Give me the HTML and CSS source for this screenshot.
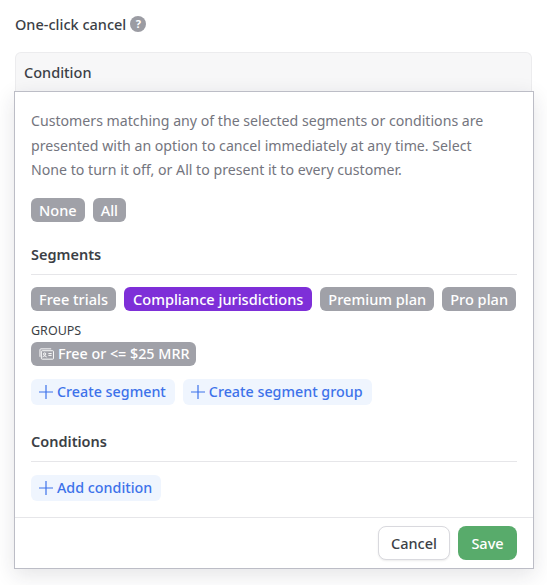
FILE: index.html
```html
<!DOCTYPE html>
<html lang="en">
<head>
    <meta charset="UTF-8">
    <meta name="viewport" content="width=device-width, initial-scale=1.0">
    <title>One-click cancel</title>
    <link rel="stylesheet" href="styles.css">
</head>
<body>
    <div class="field-title">
        <span>One-click cancel</span>
        <span class="help">?</span>
    </div>
    <div class="card">
        <div class="card-header">Condition</div>
        <div class="panel">
            <div class="panel-body">
                <p class="intro">Customers matching any of the selected segments or conditions are presented with an option to cancel immediately at any time. Select None to turn it off, or All to present it to every customer.</p>
                <div class="tags">
                    <span class="tag">None</span>
                    <span class="tag">All</span>
                </div>

                <h3 class="section-title">Segments</h3>
                <div class="tags">
                    <span class="tag">Free trials</span>
                    <span class="tag tag-active">Compliance jurisdictions</span>
                    <span class="tag">Premium plan</span>
                    <span class="tag">Pro plan</span>
                </div>
                <div class="groups-label">GROUPS</div>
                <div class="tags">
                    <span class="tag tag-group">
                        <svg class="group-icon" viewBox="0 0 16 12" fill="none" stroke="currentColor" stroke-width="1">
                            <rect x="2.5" y="2.5" width="13" height="9" rx="1"/>
                            <path d="M1 9V1.5A1 1 0 0 1 2 .5h11"/>
                            <circle cx="6" cy="6" r="1.2"/>
                            <path d="M4 9.5c0-2 4-2 4 0M10 5.5h3.5M10 7.5h3.5"/>
                        </svg>
                        Free or &lt;= $25 MRR
                    </span>
                </div>
                <div class="actions">
                    <a class="add-btn"><svg class="plus" viewBox="0 0 14 14"><path d="M7 0v14M0 7h14"/></svg>Create segment</a>
                    <a class="add-btn"><svg class="plus" viewBox="0 0 14 14"><path d="M7 0v14M0 7h14"/></svg>Create segment group</a>
                </div>

                <h3 class="section-title section-conditions">Conditions</h3>
                <div class="actions actions-conditions">
                    <a class="add-btn"><svg class="plus" viewBox="0 0 14 14"><path d="M7 0v14M0 7h14"/></svg>Add condition</a>
                </div>
            </div>
            <div class="panel-footer">
                <button class="btn btn-cancel">Cancel</button>
                <button class="btn btn-save">Save</button>
            </div>
        </div>
    </div>
</body>
</html>
```

FILE: styles.css
```css
* {
    box-sizing: border-box;
}
body {
    margin: 0;
    padding: 13px 15px 0;
    background: #fff;
    font-family: "Noto Sans", "Lato", sans-serif;
    font-size: 14.5px;
    color: #3c3f46;
    height: 585px;
    overflow: hidden;
}
.field-title {
    display: flex;
    align-items: center;
    gap: 4px;
    height: 21px;
    font-weight: 500;
}
.help {
    width: 16px;
    height: 16px;
    border-radius: 50%;
    background: #9b9ca3;
    color: #fff;
    font-size: 11px;
    font-weight: 700;
    line-height: 16px;
    text-align: center;
}
.card {
    margin-top: 18px;
}
.card-header {
    height: 40px;
    padding: 0 8px;
    line-height: 39px;
    font-weight: 500;
    background: #f7f7f8;
    border: 1px solid #ececee;
    border-bottom: none;
    border-radius: 6px 6px 0 0;
}
.panel {
    margin: -1px -2px 0 -1px;
    height: 478px;
    background: #fff;
    border: 1px solid #bcbdc6;
    box-shadow: 0 6px 20px rgba(30, 30, 50, 0.12);
    display: flex;
    flex-direction: column;
    position: relative;
}
.panel-body {
    flex: 1;
    padding: 17px 16px 0;
}
.intro {
    margin: 0;
    padding-right: 30px;
    font-size: 14.15px;
    line-height: 24.5px;
    color: #74757e;
}
.tags {
    display: flex;
    gap: 8px;
    margin-top: 15px;
}
.tag {
    display: inline-flex;
    align-items: center;
    height: 24px;
    padding: 0 8px;
    border-radius: 6px;
    background: #a0a1a8;
    color: #fff;
    font-size: 14.55px;
    font-weight: 500;
}
.tag-active {
    padding: 0 9px;
    background: #7e2fd8;
}
.tag-group {
    gap: 4px;
    padding-right: 7px;
    font-size: 14.3px;
}
.group-icon {
    width: 15px;
    height: 12px;
}
.section-title {
    margin: 22px 0 0;
    padding-bottom: 10px;
    border-bottom: 1px solid #e6e6e9;
    font-size: 14.5px;
    line-height: 20px;
    font-weight: 600;
}
.section-title + .tags {
    margin-top: 12px;
}
.section-conditions {
    margin-top: 26px;
}
.groups-label {
    margin-top: 11px;
    font-size: 12.5px;
    line-height: 17px;
}
.groups-label + .tags {
    margin-top: 3px;
}
.actions {
    display: flex;
    gap: 8px;
    margin-top: 13px;
}
.actions-conditions {
    margin-top: 13px;
}
.add-btn {
    display: inline-flex;
    align-items: center;
    gap: 4px;
    height: 26px;
    padding: 0 9px 0 8px;
    border-radius: 6px;
    background: #eff5fe;
    color: #3d72ea;
    font-size: 14.3px;
    font-weight: 500;
}
.plus {
    width: 14px;
    height: 14px;
    fill: none;
    stroke: #3d72ea;
    stroke-width: 1.2;
}
.panel-footer {
    display: flex;
    justify-content: flex-end;
    gap: 8px;
    height: 51px;
    padding: 8px 16px 0;
    border-top: 1px solid #e6e6e9;
}
.btn {
    height: 34px;
    border-radius: 8px;
    font-family: inherit;
    font-size: 14.5px;
    font-weight: 500;
}
.btn-cancel {
    width: 72px;
    background: #fff;
    border: 1px solid #d9d9de;
    color: #3c3f46;
    box-shadow: 0 1px 2px rgba(0, 0, 0, 0.08);
}
.btn-save {
    width: 59px;
    background: #58ab6b;
    border: none;
    color: #fff;
}
```
